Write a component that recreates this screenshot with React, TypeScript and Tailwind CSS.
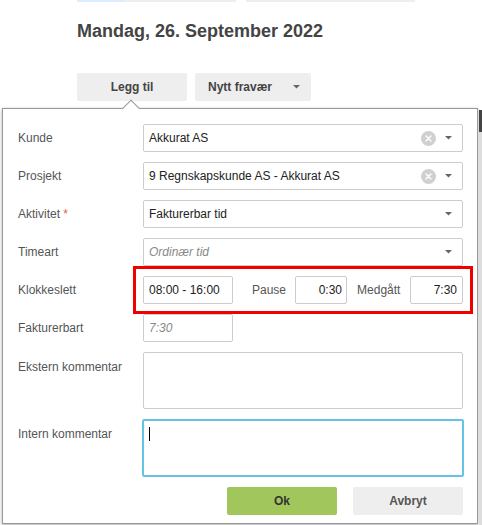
import React from 'react';

const font = { fontFamily: '"Liberation Sans", Arial, sans-serif' };

const Caret: React.FC<{ className?: string }> = ({ className = '' }) => (
  <svg width="7" height="4" viewBox="0 0 7 4" className={className}>
    <path d="M0 0 L7 0 L3.5 3.5 Z" fill="#666" />
  </svg>
);

const ClearIcon: React.FC = () => (
  <svg width="15" height="15" viewBox="0 0 15 15">
    <circle cx="7.5" cy="7.5" r="7.5" fill="#d0d0d0" />
    <path d="M5 5 L10 10 M10 5 L5 10" stroke="#fff" strokeWidth="1.4" strokeLinecap="round" />
  </svg>
);

interface SelectProps {
  value: string;
  clearable?: boolean;
  placeholder?: boolean;
}

const Select: React.FC<SelectProps> = ({ value, clearable, placeholder }) => (
  <div className="flex h-[28px] flex-1 items-center rounded-[2px] border border-[#ccc] bg-white pl-[5px] pr-[10px]">
    <span className={`flex-1 truncate ${placeholder ? 'italic text-[#888]' : 'text-[#222]'}`}>{value}</span>
    {clearable && (
      <span className="mr-[9px] flex">
        <ClearIcon />
      </span>
    )}
    <Caret />
  </div>
);

const Row: React.FC<{ label: React.ReactNode; top?: boolean; children: React.ReactNode }> = ({
  label,
  top,
  children,
}) => (
  <div className={`flex ${top ? 'items-start' : 'items-center'}`}>
    <div className={`w-[125px] shrink-0 text-[#555] ${top ? 'pt-[6px]' : ''}`}>{label}</div>
    <div className="flex flex-1 items-center">{children}</div>
  </div>
);

export default function App() {
  return (
    <div className="relative h-[525px] w-[482px] overflow-hidden bg-white text-[12px]" style={font}>
      {/* cut-off tabs at top */}
      <div className="flex h-[2px] pl-[77px]">
        <div className="w-[47px] bg-[#dbeeff]" />
        <div className="w-[112px] bg-[#eee]" />
        <div className="w-[10px]" />
        <div className="w-[169px] bg-[#eee]" />
      </div>

      <div className="pl-[77px]">
        <h1 className="mt-[18px] text-[18px] font-bold leading-[22px] text-[#444]">Mandag, 26. September 2022</h1>
        <div className="mt-[31px] flex gap-[8px]">
          <button className="h-[28px] w-[110px] rounded-[2px] bg-[#eee] font-bold text-[#444]">Legg til</button>
          <button className="flex h-[28px] w-[116px] items-center rounded-[2px] bg-[#eee] pl-[13px] pr-[11px] font-bold text-[#444]">
            <span className="flex-1 text-left">Nytt fravær</span>
            <Caret />
          </button>
        </div>
      </div>

      {/* popup */}
      <div className="relative ml-[2px] mt-[7px] h-[416px] w-[476px] border border-[#999] bg-white pl-[15px] pr-[14px] pt-[15px] shadow-[0_1px_3px_rgba(0,0,0,0.35)]">
        <div className="absolute left-[122px] top-[-7px] h-[12px] w-[12px] rotate-45 border-l border-t border-[#999] bg-white" />
        <div className="flex flex-col gap-[10px]">
          <Row label="Kunde">
            <Select value="Akkurat AS" clearable />
          </Row>
          <Row label="Prosjekt">
            <Select value="9 Regnskapskunde AS - Akkurat AS" clearable />
          </Row>
          <Row
            label={
              <>
                Aktivitet <span className="text-[#e8574a]">*</span>
              </>
            }
          >
            <Select value="Fakturerbar tid" />
          </Row>
          <Row label="Timeart">
            <Select value="Ordinær tid" placeholder />
          </Row>
          <Row label="Klokkeslett">
            <div className="flex flex-1 items-center outline outline-[3px] outline-offset-[7px] outline-[#f00000]">
              <div className="flex h-[28px] w-[90px] items-center rounded-[2px] border border-[#ccc] px-[5px] text-[#222]">
                08:00 - 16:00
              </div>
              <span className="ml-[19px] text-[#555]">Pause</span>
              <div className="ml-[9px] flex h-[28px] w-[52px] items-center justify-end rounded-[2px] border border-[#ccc] px-[4px] text-[#222]">
                0:30
              </div>
              <span className="ml-[10px] text-[#555]">Medgått</span>
              <div className="ml-auto flex h-[28px] w-[53px] items-center justify-end rounded-[2px] border border-[#ccc] px-[5px] text-[#222]">
                7:30
              </div>
            </div>
          </Row>
          <Row label="Fakturerbart">
            <div className="flex h-[28px] w-[90px] items-center rounded-[2px] border border-[#ccc] px-[5px] italic text-[#888]">
              7:30
            </div>
          </Row>
          <Row label="Ekstern kommentar" top>
            <div className="h-[57px] flex-1 rounded-[2px] border border-[#ccc]" />
          </Row>
          <Row label="Intern kommentar" top>
            <div className="ml-[-1px] mr-[-1px] h-[58px] flex-1 rounded-[2px] border-2 border-[#66c3e4] pl-[5px] pt-[6px]">
              <div className="h-[14px] w-[1px] bg-black" />
            </div>
          </Row>
          <div className="flex justify-end gap-[16px]">
            <button className="h-[28px] w-[110px] rounded-[2px] bg-[#a1c75c] font-bold text-[#333]">Ok</button>
            <button className="h-[28px] w-[110px] rounded-[2px] bg-[#eee] font-bold text-[#555]">Avbryt</button>
          </div>
        </div>
      </div>

      {/* scrollbar sliver */}
      <div className="absolute right-0 top-[110px] flex h-[415px] w-[3px] flex-col">
        <div className="h-[22px] bg-[#444]" />
        <div className="flex-1 bg-[#ddd]" />
      </div>
    </div>
  );
}
